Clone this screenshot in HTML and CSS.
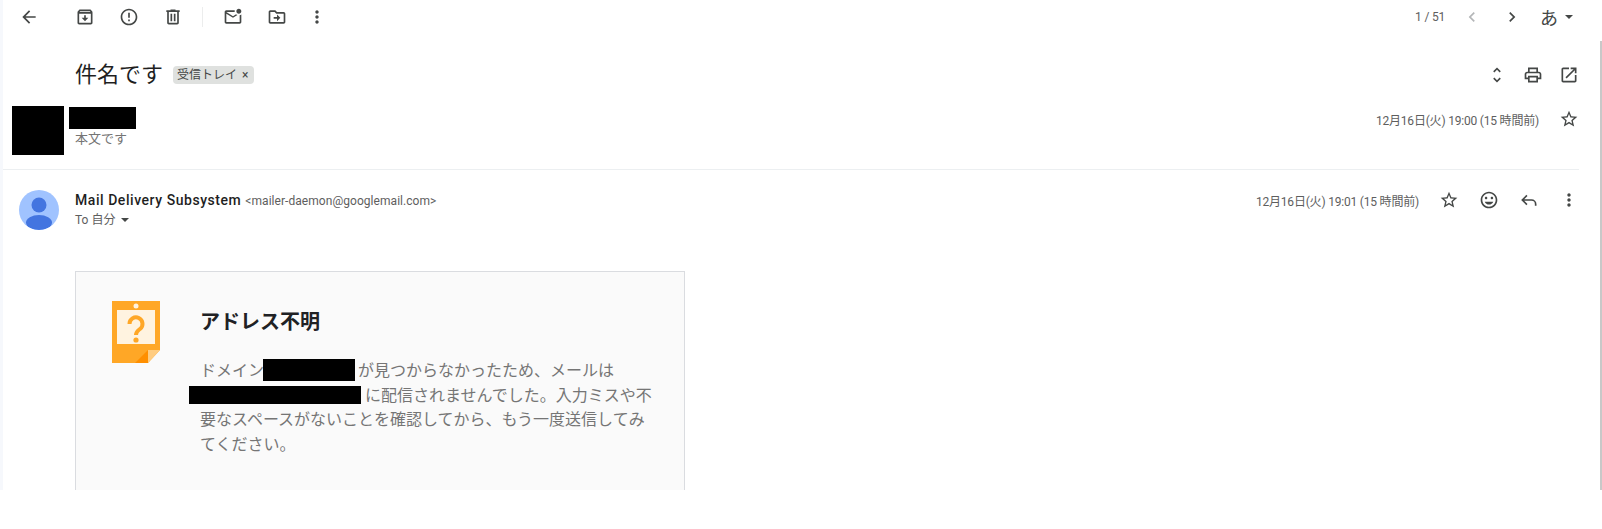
FILE: index.html
```html
<!DOCTYPE html>
<html lang="ja">
<head>
    <meta charset="UTF-8">
    <meta name="viewport" content="width=device-width, initial-scale=1.0">
    <title>件名です</title>
    <link rel="stylesheet" href="styles.css">
</head>
<body>
    <div class="app">
        <!-- top toolbar -->
        <div class="toolbar">
            <div class="tool tool-back"><svg class="icon" viewBox="0 0 24 24"><path d="M20 11H7.83l5.59-5.59L12 4l-8 8 8 8 1.41-1.41L7.83 13H20v-2z"/></svg></div>
            <div class="tool-group">
                <div class="tool"><svg class="icon" viewBox="0 0 24 24"><path d="M20.54 5.23l-1.39-1.68C18.88 3.21 18.47 3 18 3H6c-.47 0-.88.21-1.16.55L3.46 5.23C3.17 5.57 3 6.02 3 6.5V19c0 1.1.9 2 2 2h14c1.1 0 2-.9 2-2V6.5c0-.48-.17-.93-.46-1.27zM6.24 5h11.52l.81.97H5.44l.8-.97zM5 19V8h14v11H5zm8-9h-2v3H8l4 4 4-4h-3z"/></svg></div>
                <div class="tool"><svg class="icon" viewBox="0 0 24 24"><path d="M11 15h2v2h-2zm0-8h2v6h-2zm.99-5C6.47 2 2 6.48 2 12s4.47 10 9.99 10C17.52 22 22 17.52 22 12S17.52 2 11.99 2zM12 20c-4.42 0-8-3.58-8-8s3.58-8 8-8 8 3.58 8 8-3.58 8-8 8z"/></svg></div>
                <div class="tool"><svg class="icon" viewBox="0 0 24 24"><path d="M15 4V3H9v1H4v2h1v13c0 1.1.9 2 2 2h10c1.1 0 2-.9 2-2V6h1V4h-5zm2 15H7V6h10v13zM9 8h2v9H9zm4 0h2v9h-2z"/></svg></div>
            </div>
            <div class="tool-sep"></div>
            <div class="tool-group tool-group-second">
                <div class="tool"><svg class="icon" viewBox="0 0 24 24"><path d="M22 8.98V18c0 1.1-.9 2-2 2H4c-1.1 0-2-.9-2-2V6c0-1.1.9-2 2-2h10.1c-.06.32-.1.66-.1 1 0 .34.04.68.1 1H4l8 5 3.67-2.29c.47.43 1.02.76 1.63.98L12 13 4 8v10h16V9.9c.74-.15 1.42-.48 2-.92zM16 5c0 1.66 1.34 3 3 3s3-1.34 3-3-1.34-3-3-3-3 1.34-3 3z"/></svg></div>
                <div class="tool"><svg class="icon" viewBox="0 0 24 24"><path d="M20 6h-8l-2-2H4c-1.1 0-1.99.9-1.99 2L2 18c0 1.1.9 2 2 2h16c1.1 0 2-.9 2-2V8c0-1.1-.9-2-2-2zm0 12H4V6h5.17l2 2H20v10zm-8-4H8v-2h4V9l4 4-4 4v-3z"/></svg></div>
                <div class="tool tool-narrow"><svg class="icon" viewBox="0 0 24 24"><path d="M12 8c1.1 0 2-.9 2-2s-.9-2-2-2-2 .9-2 2 .9 2 2 2zm0 2c-1.1 0-2 .9-2 2s.9 2 2 2 2-.9 2-2-.9-2-2-2zm0 6c-1.1 0-2 .9-2 2s.9 2 2 2 2-.9 2-2-.9-2-2-2z"/></svg></div>
            </div>
            <div class="pager">
                <span class="pager-count">1 / 51</span>
                <div class="tool tool-pager"><svg class="icon icon-off" viewBox="0 0 24 24"><path d="M15.41 7.41L14 6l-6 6 6 6 1.41-1.41L10.83 12z"/></svg></div>
                <div class="tool tool-pager"><svg class="icon" viewBox="0 0 24 24"><path d="M10 6L8.59 7.41 13.17 12l-4.58 4.59L10 18l6-6z"/></svg></div>
                <span class="ime">あ</span>
                <span class="caret caret-ime"></span>
            </div>
        </div>

        <!-- subject -->
        <div class="subject-row">
            <h1 class="subject">件名です</h1>
            <span class="chip">受信トレイ<span class="chip-x">×</span></span>
            <div class="subject-tools">
                <svg class="icon" viewBox="0 0 24 24"><path d="M12 5.83L15.17 9l1.41-1.41L12 3 7.41 7.59 8.83 9 12 5.83zm0 12.34L8.83 15l-1.41 1.41L12 21l4.59-4.59L15.17 15 12 18.17z"/></svg>
                <svg class="icon" viewBox="0 0 24 24"><path d="M19 8h-1V3H6v5H5c-1.66 0-3 1.34-3 3v6h4v4h12v-4h4v-6c0-1.66-1.34-3-3-3zM8 5h8v3H8V5zm8 14H8v-4h8v4zm2-4v-2H6v2H4v-4c0-.55.45-1 1-1h14c.55 0 1 .45 1 1v4h-2z"/></svg>
                <svg class="icon" viewBox="0 0 24 24"><path d="M19 19H5V5h7V3H5c-1.11 0-2 .9-2 2v14c0 1.1.89 2 2 2h14c1.1 0 2-.9 2-2v-7h-2v7zM14 3v2h3.59l-9.83 9.83 1.41 1.41L19 6.41V10h2V3h-7z"/></svg>
            </div>
        </div>

        <!-- collapsed message -->
        <div class="collapsed">
            <div class="redact redact-avatar"></div>
            <div class="collapsed-main">
                <div class="redact redact-name"></div>
                <div class="snippet">本文です</div>
            </div>
            <div class="collapsed-meta">
                <span class="date">12月16日(火) 19:00 (15 時間前)</span>
                <svg class="icon" viewBox="0 0 24 24"><path d="M22 9.24l-7.19-.62L12 2 9.19 8.63 2 9.24l5.46 4.73L5.82 21 12 17.27 18.18 21l-1.63-7.03L22 9.24zM12 15.4l-3.76 2.27 1-4.28-3.32-2.88 4.38-.38L12 6.1l1.71 4.04 4.38.38-3.32 2.88 1 4.28L12 15.4z"/></svg>
            </div>
        </div>

        <!-- open message -->
        <div class="message">
            <div class="message-head">
                <svg class="avatar" viewBox="0 0 40 40">
                    <defs><clipPath id="avatar-clip"><circle cx="20" cy="20" r="20"/></clipPath></defs>
                    <circle cx="20" cy="20" r="20" fill="#a0c3ff"/>
                    <g clip-path="url(#avatar-clip)" fill="#4375e0">
                        <circle cx="20" cy="15" r="7.5"/>
                        <ellipse cx="20" cy="32.5" rx="13" ry="7.5"/>
                    </g>
                </svg>
                <div class="sender">
                    <div class="sender-line"><span class="sender-name">Mail Delivery Subsystem</span> <span class="sender-mail">&lt;mailer-daemon@googlemail.com&gt;</span></div>
                    <div class="to-line">To 自分<span class="caret caret-to"></span></div>
                </div>
                <div class="message-meta">
                    <span class="date">12月16日(火) 19:01 (15 時間前)</span>
                    <svg class="icon" viewBox="0 0 24 24"><path d="M22 9.24l-7.19-.62L12 2 9.19 8.63 2 9.24l5.46 4.73L5.82 21 12 17.27 18.18 21l-1.63-7.03L22 9.24zM12 15.4l-3.76 2.27 1-4.28-3.32-2.88 4.38-.38L12 6.1l1.71 4.04 4.38.38-3.32 2.88 1 4.28L12 15.4z"/></svg>
                    <svg class="icon" viewBox="0 0 24 24"><path d="M11.99 2C6.47 2 2 6.48 2 12s4.47 10 9.99 10C17.52 22 22 17.52 22 12S17.52 2 11.99 2zM12 20c-4.42 0-8-3.58-8-8s3.58-8 8-8 8 3.58 8 8-3.58 8-8 8zm3.5-9c.83 0 1.5-.67 1.5-1.5S16.33 8 15.5 8 14 8.67 14 9.5s.67 1.5 1.5 1.5zm-7 0c.83 0 1.5-.67 1.5-1.5S9.33 8 8.5 8 7 8.67 7 9.5 7.67 11 8.5 11zm3.5 6.5c2.33 0 4.31-1.46 5.11-3.5H6.89c.8 2.04 2.78 3.5 5.11 3.5z"/></svg>
                    <svg class="icon icon-line" viewBox="0 0 24 24"><path d="M9.5 6.5 4 12l5.5 5.5M4 12h11a5 5 0 0 1 5 5v2"/></svg>
                    <svg class="icon" viewBox="0 0 24 24"><path d="M12 8c1.1 0 2-.9 2-2s-.9-2-2-2-2 .9-2 2 .9 2 2 2zm0 2c-1.1 0-2 .9-2 2s.9 2 2 2 2-.9 2-2-.9-2-2-2zm0 6c-1.1 0-2 .9-2 2s.9 2 2 2 2-.9 2-2-.9-2-2-2z"/></svg>
                </div>
            </div>

            <div class="bounce-card">
                <svg class="note" viewBox="0 0 48 62">
                    <polygon points="0,0 48,0 48,49 36,62 0,62" fill="#ffa726"/>
                    <rect x="5" y="9" width="38" height="34" fill="#fff3e0"/>
                    <circle cx="24" cy="5" r="2.5" fill="#fff3e0"/>
                    <path d="M17.5 23a6.5 6.5 0 1 1 10.5 5c-2.4 1.9-4 2.5-4 6" fill="none" stroke="#ffa726" stroke-width="4"/>
                    <circle cx="24" cy="39" r="2.6" fill="#ffa726"/>
                    <polygon points="36,49 48,49 36,62" fill="#ffcc80"/>
                    <polygon points="23,62 36,49 36,62" fill="#ff8f00"/>
                </svg>
                <div class="bounce-text">
                    <h2 class="bounce-title">アドレス不明</h2>
                    <p class="bounce-body">ドメイン<span class="redact redact-domain"></span>が見つからなかったため、メールは<br><span class="redact redact-addr"></span>に配信されませんでした。入力ミスや不<br>要なスペースがないことを確認してから、もう一度送信してみ<br>てください。</p>
                </div>
            </div>
        </div>
    </div>
    <div class="scrollbar"></div>
</body>
</html>
```

FILE: styles.css
```css
body {
    margin: 0;
    height: 529px;
    overflow: hidden;
    background-color: #fff;
    color: #1f1f1f;
    font-family: Roboto, "Noto Sans CJK JP", sans-serif;
}

.app {
    height: 490px;
    overflow: hidden;
    border-left: 3px solid #f6f8fc;
    box-sizing: border-box;
}

.icon {
    width: 20px;
    height: 20px;
    display: block;
    flex-shrink: 0;
    fill: #444746;
}

.icon-off {
    fill: #b4b6b8;
}

.icon-line {
    fill: none;
    stroke: #444746;
    stroke-width: 2;
}

/* toolbar */
.toolbar {
    display: flex;
    align-items: center;
    height: 33px;
    padding-right: 29px;
}

.tool {
    width: 44px;
    display: flex;
    justify-content: center;
}

.tool-back {
    margin-left: 4px;
}

.tool-group {
    display: flex;
    margin-left: 12px;
}

.tool-group-second {
    margin-left: 8px;
}

.tool-narrow {
    width: 36px;
}

.tool-sep {
    width: 1px;
    height: 20px;
    margin-left: 7px;
    background-color: #eceded;
}

.pager {
    margin-left: auto;
    display: flex;
    align-items: center;
    color: #5e5e5e;
}

.pager-count {
    font-size: 12px;
    letter-spacing: -0.2px;
    margin-right: 7px;
}

.tool-pager {
    width: 40px;
}

.ime {
    margin-left: 8px;
    font-size: 18px;
    color: #444746;
}

.caret {
    display: inline-block;
    width: 0;
    height: 0;
    border-left: 4px solid transparent;
    border-right: 4px solid transparent;
    border-top: 4px solid #444746;
}

.caret-ime {
    margin-left: 7px;
}

.caret-to {
    margin-left: 6px;
    vertical-align: 2px;
}

/* subject */
.subject-row {
    display: flex;
    align-items: center;
    height: 40px;
    margin-top: 22px;
    margin-right: 23px;
}

.subject {
    margin: 0 0 0 72px;
    font-size: 22px;
    font-weight: 400;
    line-height: 40px;
}

.chip {
    margin-left: 10px;
    height: 18px;
    padding: 0 6px 0 4px;
    border-radius: 4px;
    background-color: #dfe1df;
    color: #444746;
    font-size: 12px;
    line-height: 18px;
}

.chip-x {
    margin-left: 5px;
}

.subject-tools {
    margin-left: auto;
    display: flex;
    gap: 16px;
}

/* collapsed message */
.collapsed {
    display: flex;
    margin-top: 11px;
    margin-right: 23px;
    padding-bottom: 14px;
    border-bottom: 1px solid #eceff1;
}

.redact {
    background-color: #000;
}

.redact-avatar {
    width: 52px;
    height: 49px;
    margin-left: 9px;
}

.collapsed-main {
    margin-left: 5px;
}

.redact-name {
    width: 67px;
    height: 22px;
    margin-top: 1px;
}

.snippet {
    margin: 1px 0 0 6px;
    font-size: 13px;
    line-height: 17px;
    color: #757575;
}

.collapsed-meta {
    margin-left: auto;
    margin-top: 3px;
    display: flex;
    gap: 20px;
    height: 20px;
    align-items: center;
}

.date {
    font-size: 12px;
    letter-spacing: -0.2px;
    color: #5e5e5e;
}

/* open message */
.message {
    margin-right: 23px;
    padding-top: 20px;
}

.message-head {
    display: flex;
    height: 40px;
}

.avatar {
    width: 40px;
    height: 40px;
    margin-left: 16px;
}

.sender {
    margin-left: 16px;
}

.sender-line {
    height: 20px;
    line-height: 20px;
}

.sender-name {
    font-size: 14px;
    font-weight: 500;
    letter-spacing: 0.55px;
    color: #1f1f1f;
}

.sender-mail {
    font-size: 12px;
    letter-spacing: 0.05px;
    color: #5e5e5e;
}

.to-line {
    font-size: 12px;
    line-height: 20px;
    color: #5e5e5e;
}

.message-meta {
    margin-left: auto;
    height: 20px;
    display: flex;
    gap: 20px;
    align-items: center;
}

.bounce-card {
    display: flex;
    width: 608px;
    height: 300px;
    margin: 41px 0 0 72px;
    border: 1px solid #dadce0;
    background-color: #fafafa;
}

.note {
    width: 48px;
    height: 62px;
    margin: 29px 0 0 36px;
    flex-shrink: 0;
}

.bounce-text {
    width: 460px;
    margin-left: 40px;
    padding-top: 35px;
}

.bounce-title {
    margin: 0;
    font-size: 20px;
    font-weight: 700;
    line-height: 30px;
    color: #202124;
}

.bounce-body {
    margin: 22px 0 0;
    font-size: 16px;
    line-height: 24.5px;
    color: #757575;
}

.redact-domain {
    display: inline-block;
    width: 92px;
    height: 22px;
    margin: 0 3px 0 -1px;
    vertical-align: -5px;
}

.redact-addr {
    display: inline-block;
    width: 172px;
    height: 18px;
    margin: 0 4px 0 -11px;
    vertical-align: -3px;
}

.scrollbar {
    position: absolute;
    top: 41px;
    right: 0;
    width: 2px;
    height: 449px;
    background-color: #c8c8c8;
}
```
